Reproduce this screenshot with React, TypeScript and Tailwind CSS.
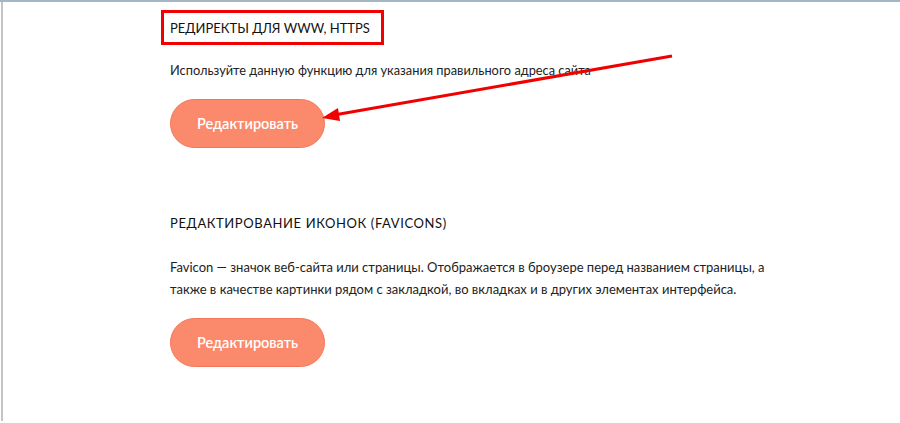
import React from 'react';

const EditButton: React.FC = () => (
  <button className="w-[155px] h-[49px] rounded-full bg-[#fb8a6c] border border-[#f4765a] text-white text-[14.5px] font-[Lato,sans-serif] font-semibold">
    Редактировать
  </button>
);

const App: React.FC = () => {
  return (
    <div className="relative w-[900px] h-[423px] bg-white border-t-2 border-[#a3b6c6] overflow-hidden font-[Lato,'Noto_Sans',sans-serif] text-[#222]">
      <div className="absolute left-[1px] top-0 bottom-[2px] w-[2px] bg-[#c4c4c4]"></div>

      <div className="pl-[170px] pt-[17px]">
        {/* Section 1 */}
        <div className="relative">
          <div className="absolute -left-[9px] -top-[9px] w-[223px] h-[35px] border-[3px] border-[#f00000]"></div>
          <h2 className="text-[13px] uppercase leading-[18px] text-[#111]">
            Редиректы для www, https
          </h2>
        </div>
        <p className="mt-[23px] text-[12.8px] leading-[20px] text-[#222]">
          Используйте данную функцию для указания правильного адреса сайта
        </p>
        <div className="mt-[19px]">
          <EditButton />
        </div>

        {/* Section 2 */}
        <h2 className="mt-[66px] text-[13px] tracking-[0.6px] uppercase leading-[18px] text-[#111]">
          Редактирование иконок (favicons)
        </h2>
        <p className="mt-[24px] w-[620px] text-[13px] leading-[22px] text-[#222]">
          Favicon — значок веб-сайта или страницы. Отображается в броузере перед названием страницы, а
          также в качестве картинки рядом с закладкой, во вкладках и в других элементах интерфейса.
        </p>
        <div className="mt-[18px]">
          <EditButton />
        </div>
      </div>

      {/* Annotation arrow */}
      <svg className="absolute left-0 top-0 pointer-events-none" width="900" height="423">
        <line x1="672" y1="54" x2="334" y2="113" stroke="#f00000" strokeWidth="3" />
        <polygon points="322,116 338,106 340,119" fill="#f00000" />
      </svg>
    </div>
  );
};

export default App;
